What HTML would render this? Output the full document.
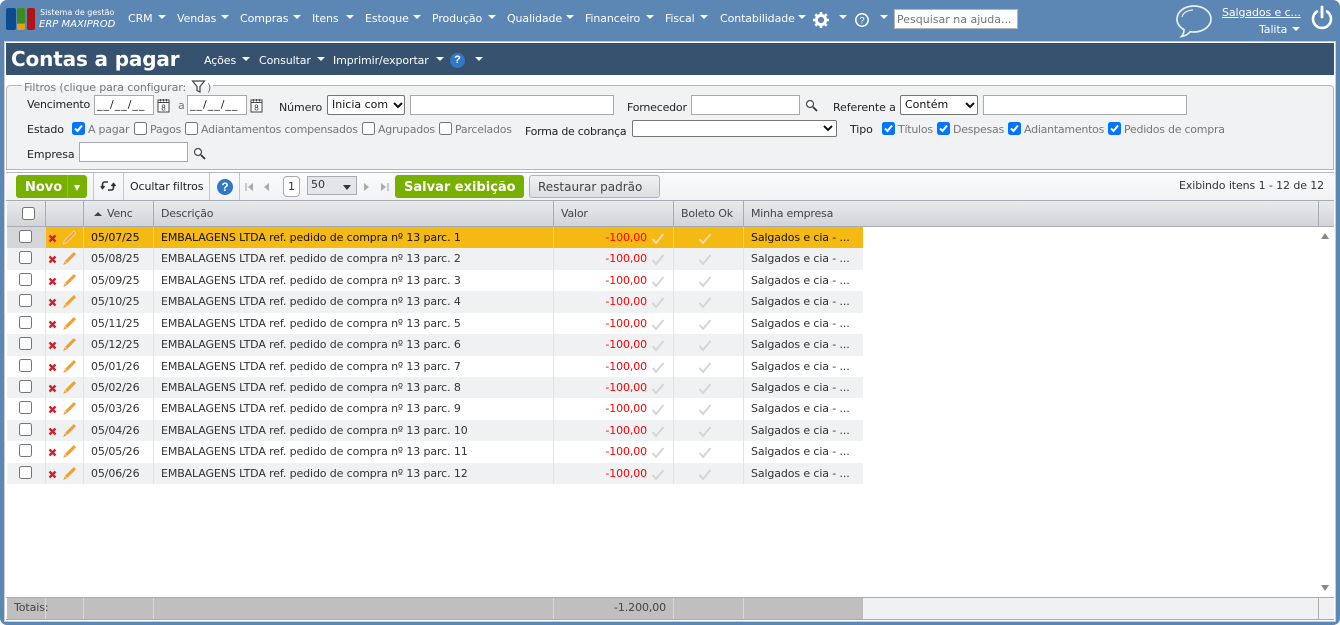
<!DOCTYPE html>
<html lang="pt-BR">
<head>
<meta charset="utf-8">
<title>Contas a pagar</title>
<style>
html,body{margin:0;padding:0;width:1340px;height:625px;overflow:hidden;background:#fff}
body{position:relative;font-family:"DejaVu Sans","Liberation Sans",sans-serif;font-size:11px;color:#222}
.a{position:absolute}
.t{position:absolute;white-space:nowrap;line-height:14px;letter-spacing:-.1px}
.m{color:#fff;top:12px;font-size:11px}
.c{position:absolute;width:0;height:0;border-left:4px solid transparent;border-right:4px solid transparent;border-top:4px solid #fff}
.inp{position:absolute;box-sizing:border-box;background:#fff;border:1px solid #a9a9a9;height:20px}
.cb{position:absolute;box-sizing:border-box;width:13px;height:13px;border:1px solid #767676;border-radius:2.5px;background:#fff}
.cb.on{background:#0075ff;border-color:#0075ff}
.cb.on svg{position:absolute;left:0;top:0}
.g{color:#777;letter-spacing:-.25px}
.d{letter-spacing:1px}
.sel{position:absolute;box-sizing:border-box;background:#fff;border:1px solid #767676;border-radius:2px;height:20px;line-height:18px;padding-left:4px;font-size:11px;color:#111}
.hd{position:absolute;top:201px;height:25px;border-right:1px solid #a7adb5;box-sizing:border-box;background:linear-gradient(#e9eaec,#d2d4d8)}
.ht{position:absolute;top:207px;color:#444;white-space:nowrap;line-height:14px;letter-spacing:-.2px}
.r{position:absolute;left:7px;width:856px;background:#fff}
.r.e{background:#f0f1f3}
.r.o{background:#f5b914}
.r b{position:absolute;top:0;bottom:0;width:1px;background:#e2e3e5;font-weight:normal}
.r.o b{background:#f8d260}
.r span{position:absolute;top:4px;white-space:nowrap;line-height:14px;letter-spacing:-.12px;color:#333}
.r.o span{color:#111}
.r span.v{color:#f00;right:216px}
.r .k{position:absolute;left:12px;top:3px;width:13px;height:13px;box-sizing:border-box;border:1px solid #767676;border-radius:2.5px;background:#fff}
.r svg{position:absolute}
.x{left:41px;top:7px}
.p{left:55px;top:3px}
.k1{left:644px;top:5px}
.k2{left:691px;top:5px}
.f{position:absolute;top:598px;height:21px;background:#bfbfbf;border-right:1px solid #d8d8d8;box-sizing:border-box}
</style>
</head>
<body>
<div class="a" style="left:0;top:0;width:1340px;height:625px;background:#5c86b3;border-radius:7px"></div>

<svg width="0" height="0" style="position:absolute">
<symbol id="ix" viewBox="0 0 9 9"><path d="M1.500 1.500l6 6M7.500 1.500l-6 6" stroke="#c9252c" stroke-width="2.400"/></symbol>
<symbol id="ip" viewBox="0 0 15 15"><path d="M11.800 1l2.200 2.200L5 12.300 1.200 14l1.600-4z" fill="#f0a035"/><path d="M2.800 10l2.200 2.300" stroke="#f7cf9a" stroke-width="1"/></symbol>
<symbol id="ipo" viewBox="0 0 15 15"><path d="M11.800 1l2.200 2.200L5 12.300 1.200 14l1.600-4z" fill="#f2a83a" stroke="#f9d78d" stroke-width=".8"/></symbol>
<symbol id="ic" viewBox="0 0 14 13"><path d="M1.500 7l3.500 4 7.500-9" fill="none" stroke="#d5d5d5" stroke-width="2"/></symbol>
<symbol id="ico" viewBox="0 0 14 13"><path d="M1.500 7l3.500 4 7.500-9" fill="none" stroke="#ecdcae" stroke-width="2"/></symbol>
<symbol id="cal" viewBox="0 0 13 15"><rect x="1" y="2" width="11" height="12" fill="#fff" stroke="#444"/><path d="M1 4.500h11M3.500 1v2.500M6.500 1v2.500M9.500 1v2.500" stroke="#444"/><text x="6.500" y="12.500" font-size="8" text-anchor="middle" fill="#333" font-family="Liberation Sans">8</text></symbol>
<symbol id="lup" viewBox="0 0 13 13"><circle cx="5" cy="5" r="3.500" fill="#fff" stroke="#444" stroke-width="1.200"/><path d="M8 8l4 4" stroke="#333" stroke-width="1.800"/></symbol>
<symbol id="chev" viewBox="0 0 10 7"><path d="M1 1l4 4 4-4" fill="none" stroke="#111" stroke-width="2"/></symbol>
<symbol id="tick" viewBox="0 0 11 11"><path d="M2 5.500l2.500 2.500L9 2.500" fill="none" stroke="#fff" stroke-width="2"/></symbol>
</svg>

<!-- top bar -->
<div class="a" style="left:6px;top:8px;width:10px;height:22px;background:#0b4c8f;border-radius:2px"></div>
<div class="a" style="left:17px;top:8px;width:8px;height:15px;background:#3f8a1f;border-radius:2px 2px 0 0"></div>
<div class="a" style="left:17px;top:24px;width:8px;height:6px;background:#e0a218;border-radius:0 0 2px 2px"></div>
<div class="a" style="left:27px;top:8px;width:8px;height:22px;background:#b01414;border-radius:2px"></div>
<div class="t" style="left:40px;top:6px;color:#fff;font-size:8px;letter-spacing:0">Sistema de gestão</div>
<div class="t" style="left:39px;top:18px;color:#fff;font-size:10px;font-style:italic;letter-spacing:0">ERP MAXIPROD</div>

<div class="t m" style="left:128px">CRM</div><div class="c" style="left:158px;top:15px"></div>
<div class="t m" style="left:177px">Vendas</div><div class="c" style="left:221px;top:15px"></div>
<div class="t m" style="left:240px">Compras</div><div class="c" style="left:293px;top:15px"></div>
<div class="t m" style="left:312px">Itens</div><div class="c" style="left:346px;top:15px"></div>
<div class="t m" style="left:365px">Estoque</div><div class="c" style="left:413px;top:15px"></div>
<div class="t m" style="left:432px">Produção</div><div class="c" style="left:488px;top:15px"></div>
<div class="t m" style="left:507px">Qualidade</div><div class="c" style="left:566px;top:15px"></div>
<div class="t m" style="left:585px">Financeiro</div><div class="c" style="left:646px;top:15px"></div>
<div class="t m" style="left:665px">Fiscal</div><div class="c" style="left:700px;top:15px"></div>
<div class="t m" style="left:720px">Contabilidade</div><div class="c" style="left:798px;top:15px"></div>

<svg class="a" style="left:812px;top:11px" width="18" height="18" viewBox="0 0 18 18"><circle cx="9" cy="9" r="4.600" fill="none" stroke="#fff" stroke-width="3"/><path d="M9 1v3M9 14v3M1 9h3M14 9h3M3.300 3.300l2.100 2.100M12.600 12.600l2.100 2.100M3.300 14.700l2.100-2.100M12.600 5.400l2.100-2.100" stroke="#fff" stroke-width="2.600"/></svg>
<div class="c" style="left:839px;top:15px"></div>
<svg class="a" style="left:854px;top:12px" width="16" height="16" viewBox="0 0 16 16"><circle cx="8" cy="8" r="6.200" fill="none" stroke="#fff" stroke-width="1.500"/><text x="8" y="11.500" font-size="9.500" text-anchor="middle" fill="#fff" font-family="Liberation Sans">?</text></svg>
<div class="c" style="left:880px;top:15px"></div>
<div class="a" style="left:894px;top:9px;width:124px;height:20px;box-sizing:border-box;background:#fff;border:1px solid #b5b5b5"></div>
<div class="t" style="left:897px;top:13px;color:#757575;letter-spacing:0">Pesquisar na ajuda...</div>

<svg class="a" style="left:1175px;top:4px" width="38" height="34" viewBox="0 0 38 34"><path d="M19 2C9.500 2 2 7.700 2 15c0 4.500 2.800 8.300 7 10.600 0 2.500-.8 5-2.500 6.900 3.500-.5 6.700-2.500 8.800-4.800 1.200.2 2.400.3 3.700.3 9.400 0 17-5.800 17-13S28.400 2 19 2z" fill="none" stroke="#e8eef5" stroke-width="1.700"/><path d="M7 13c1-4 5-6.500 11-7" fill="none" stroke="#dfe7f0" stroke-width="1.300"/></svg>
<div class="t" style="left:1222px;top:6px;color:#fff;text-decoration:underline;letter-spacing:-.1px">Salgados e c...</div>
<div class="t" style="left:1259px;top:23px;color:#fff">Talita</div>
<div class="c" style="left:1292px;top:27px"></div>
<svg class="a" style="left:1310px;top:5px" width="24" height="26" viewBox="0 0 24 26"><path d="M7 6.500A9 9 0 1 0 17 6.500" fill="none" stroke="#fff" stroke-width="2.600" stroke-linecap="round"/><path d="M12 2v10" stroke="#fff" stroke-width="2.800" stroke-linecap="round"/></svg>

<!-- main container -->
<div class="a" style="left:4px;top:41px;width:1332px;height:581px;background:#fff;border:1px solid #c9ced4;box-sizing:border-box"></div>

<!-- title -->
<div class="a" style="left:6px;top:43px;width:1328px;height:32px;background:#37526f"></div>
<div class="t" style="left:11px;top:47px;color:#fff;font-size:20px;font-weight:bold;line-height:24px;letter-spacing:-.15px">Contas a pagar</div>
<div class="t" style="left:204px;top:54px;color:#fff">Ações</div><div class="c" style="left:242px;top:57px"></div>
<div class="t" style="left:259px;top:54px;color:#fff">Consultar</div><div class="c" style="left:317px;top:57px"></div>
<div class="t" style="left:333px;top:54px;color:#fff">Imprimir/exportar</div><div class="c" style="left:436px;top:57px"></div>
<div class="a" style="left:450px;top:53px;width:15px;height:15px;border-radius:50%;background:#2f78c8;color:#fff;font:bold 11px/15px 'Liberation Sans',sans-serif;text-align:center">?</div>
<div class="c" style="left:475px;top:57px"></div>

<!-- filter panel -->
<div class="a" style="left:6px;top:85px;width:1328px;height:85px;box-sizing:border-box;background:#f1f2f4;border:1px solid #b4b6b9;border-radius:4px 4px 0 0"></div>
<div class="a" style="left:22px;top:80px;width:191px;height:12px;background:linear-gradient(#fff 50%,#f1f2f4 50%)"></div>
<div class="t g" style="left:24px;top:81px;letter-spacing:-.1px">Filtros (clique para configurar:</div>
<svg class="a" style="left:191px;top:79px" width="15" height="15" viewBox="0 0 15 15"><path d="M1.500 2h12L9 7.500V13l-3-1.500v-4z" fill="none" stroke="#444" stroke-width="1.200"/></svg>
<div class="t g" style="left:207px;top:81px">)</div>

<div class="t" style="left:27px;top:98px;letter-spacing:-.2px">Vencimento</div>
<div class="inp" style="left:94px;top:95px;width:60px"></div><div class="t d" style="left:97px;top:98px">__/__/__</div>
<svg class="a" style="left:157px;top:98px" width="13" height="15"><use href="#cal"/></svg>
<div class="t g" style="left:178px;top:99px">a</div>
<div class="inp" style="left:187px;top:95px;width:60px"></div><div class="t d" style="left:190px;top:98px">__/__/__</div>
<svg class="a" style="left:250px;top:98px" width="13" height="15"><use href="#cal"/></svg>
<div class="t" style="left:279px;top:101px">Número</div>
<div class="sel" style="left:327px;top:95px;width:78px">Inicia com</div>
<svg class="a" style="left:393px;top:102px" width="10" height="7"><use href="#chev"/></svg>
<div class="inp" style="left:410px;top:95px;width:204px"></div>
<div class="t" style="left:627px;top:101px;letter-spacing:-.2px">Fornecedor</div>
<div class="inp" style="left:691px;top:95px;width:109px"></div>
<svg class="a" style="left:805px;top:99px" width="13" height="13"><use href="#lup"/></svg>
<div class="t" style="left:833px;top:101px">Referente a</div>
<div class="sel" style="left:900px;top:95px;width:78px">Contém</div>
<svg class="a" style="left:965px;top:102px" width="10" height="7"><use href="#chev"/></svg>
<div class="inp" style="left:983px;top:95px;width:204px"></div>

<div class="t" style="left:27px;top:123px">Estado</div>
<div class="cb on" style="left:72px;top:122px"><svg width="11" height="11"><use href="#tick"/></svg></div>
<div class="t g" style="left:88px;top:123px">A pagar</div>
<div class="cb" style="left:134px;top:122px"></div><div class="t g" style="left:150px;top:123px">Pagos</div>
<div class="cb" style="left:185px;top:122px"></div><div class="t g" style="left:201px;top:123px">Adiantamentos compensados</div>
<div class="cb" style="left:362px;top:122px"></div><div class="t g" style="left:378px;top:123px">Agrupados</div>
<div class="cb" style="left:439px;top:122px"></div><div class="t g" style="left:455px;top:123px">Parcelados</div>
<div class="t" style="left:525px;top:125px;letter-spacing:-.27px">Forma de cobrança</div>
<div class="sel" style="left:632px;top:120px;width:205px;height:17px"></div>
<svg class="a" style="left:823px;top:125px" width="10" height="7"><use href="#chev"/></svg>
<div class="t" style="left:850px;top:123px">Tipo</div>
<div class="cb on" style="left:882px;top:122px"><svg width="11" height="11"><use href="#tick"/></svg></div>
<div class="t g" style="left:898px;top:123px">Títulos</div>
<div class="cb on" style="left:937px;top:122px"><svg width="11" height="11"><use href="#tick"/></svg></div>
<div class="t g" style="left:953px;top:123px">Despesas</div>
<div class="cb on" style="left:1008px;top:122px"><svg width="11" height="11"><use href="#tick"/></svg></div>
<div class="t g" style="left:1024px;top:123px">Adiantamentos</div>
<div class="cb on" style="left:1108px;top:122px"><svg width="11" height="11"><use href="#tick"/></svg></div>
<div class="t g" style="left:1124px;top:123px">Pedidos de compra</div>

<div class="t" style="left:27px;top:148px">Empresa</div>
<div class="inp" style="left:79px;top:142px;width:109px"></div>
<svg class="a" style="left:193px;top:147px" width="13" height="13"><use href="#lup"/></svg>

<!-- toolbar -->
<div class="a" style="left:6px;top:172px;width:1328px;height:29px;box-sizing:border-box;background:linear-gradient(#fafbfb,#f1f2f4);border-top:1px solid #b4b6b9;border-bottom:1px solid #a7adb5"></div>
<div class="a" style="left:16px;top:175px;width:71px;height:23px;background:#78b000;border-radius:3px"></div>
<div class="a" style="left:67px;top:175px;width:1px;height:23px;background:#8fc21f"></div>
<div class="t" style="left:25px;top:180px;color:#fff;font-weight:bold;font-size:13px;line-height:15px;letter-spacing:0">Novo</div>
<div class="a" style="left:74px;top:185px;width:0;height:0;border-left:3.500px solid transparent;border-right:3.500px solid transparent;border-top:6px solid #fff"></div>
<div class="a" style="left:93px;top:173px;width:1px;height:27px;background:#c5c7ca"></div>
<svg class="a" style="left:100px;top:179px" width="16" height="14" viewBox="0 0 16 14"><path d="M8 3H4.500C3 3 2.500 4.500 2.500 6v3M1 7l1.500 2.500L4.500 7M8 11h3.500C13 11 13.500 9.500 13.500 8V5M11.500 7l2-2.500L15.500 7" fill="none" stroke="#333" stroke-width="1.600"/></svg>
<div class="a" style="left:123px;top:173px;width:1px;height:27px;background:#c5c7ca"></div>
<div class="t" style="left:130px;top:180px;color:#222">Ocultar filtros</div>
<div class="a" style="left:209px;top:173px;width:1px;height:27px;background:#c5c7ca"></div>
<div class="a" style="left:217px;top:179px;width:16px;height:16px;border-radius:50%;background:#2f78c8;color:#fff;font:bold 12px/16px 'Liberation Sans',sans-serif;text-align:center">?</div>
<div class="a" style="left:239px;top:173px;width:1px;height:27px;background:#c5c7ca"></div>
<svg class="a" style="left:245px;top:182px" width="10" height="10" viewBox="0 0 10 10"><path d="M1 1v8" stroke="#aaa" stroke-width="1.200"/><path d="M8 1v8L3 5z" fill="#aaa"/></svg>
<svg class="a" style="left:262px;top:182px" width="10" height="10" viewBox="0 0 10 10"><path d="M7 1v8L2 5z" fill="#aaa"/></svg>
<div class="a" style="left:283px;top:176px;width:17px;height:21px;box-sizing:border-box;background:#fff;border:1px solid #aaa;border-radius:4px;text-align:center;line-height:19px;color:#333">1</div>
<div class="a" style="left:307px;top:176px;width:50px;height:19px;box-sizing:border-box;background:#e4e5e8;border:1px solid #a9abae;line-height:16px;padding-left:3px;color:#333">50</div>
<div class="a" style="left:343px;top:185px;width:0;height:0;border-left:4.500px solid transparent;border-right:4.500px solid transparent;border-top:5px solid #333"></div>
<svg class="a" style="left:361px;top:182px" width="10" height="10" viewBox="0 0 10 10"><path d="M3 1v8l5-4z" fill="#aaa"/></svg>
<svg class="a" style="left:379px;top:182px" width="10" height="10" viewBox="0 0 10 10"><path d="M2 1v8l5-4z" fill="#aaa"/><path d="M9 1v8" stroke="#aaa" stroke-width="1.200"/></svg>
<div class="a" style="left:395px;top:175px;width:129px;height:23px;background:#78b000;border-radius:3px"></div>
<div class="t" style="left:404px;top:180px;color:#fff;font-weight:bold;font-size:13px;line-height:15px;letter-spacing:0">Salvar exibição</div>
<div class="a" style="left:529px;top:175px;width:131px;height:23px;box-sizing:border-box;background:linear-gradient(#f0f1f2,#dcdee1);border:1px solid #b0b3b7;border-radius:3px"></div>
<div class="t" style="left:538px;top:180px;color:#444;font-size:12px;letter-spacing:0">Restaurar padrão</div>
<div class="t" style="left:1179px;top:179px;color:#333">Exibindo itens 1 - 12 de 12</div>

<!-- header -->
<div class="hd" style="left:7px;width:39px"></div>
<div class="hd" style="left:46px;width:38px"></div>
<div class="hd" style="left:84px;width:70px"></div>
<div class="hd" style="left:154px;width:400px"></div>
<div class="hd" style="left:554px;width:120px"></div>
<div class="hd" style="left:674px;width:70px"></div>
<div class="hd" style="left:744px;width:575px"></div>
<div class="hd" style="left:1319px;width:15px;border-right:0"></div>
<div class="a" style="left:7px;top:226px;width:1327px;height:1px;background:#a7adb5"></div>
<div class="cb" style="left:22px;top:207px"></div>
<div class="a" style="left:94px;top:212px;width:0;height:0;border-left:4px solid transparent;border-right:4px solid transparent;border-bottom:4px solid #444"></div>
<div class="ht" style="left:107px">Venc</div>
<div class="ht" style="left:161px">Descrição</div>
<div class="ht" style="left:561px">Valor</div>
<div class="ht" style="left:681px">Boleto Ok</div>
<div class="ht" style="left:751px">Minha empresa</div>

<!-- rows -->
<div class="a" style="left:7px;top:227px;width:39px;height:21px;background:#d3d5d9;z-index:2"></div>
<div class="a" style="left:19px;top:230px;width:13px;height:13px;box-sizing:border-box;border:1px solid #767676;border-radius:2.500px;background:#fff;z-index:3"></div>

<div class="r o" style="top:227px;height:21px"><b style="left:38px"></b><b style="left:76px"></b><b style="left:146px"></b><b style="left:546px"></b><b style="left:666px"></b><b style="left:736px"></b>
<svg class="x" width="9" height="9"><use href="#ix"/></svg><svg class="p" width="15" height="15"><use href="#ipo"/></svg>
<span style="left:84px">05/07/25</span><span style="left:154px">EMBALAGENS LTDA ref. pedido de compra nº 13 parc. 1</span><span class="v">-100,00</span>
<svg class="k1" width="14" height="13"><use href="#ico"/></svg><svg class="k2" width="14" height="13"><use href="#ico"/></svg>
<span style="left:744px">Salgados e cia - ...</span></div>

<div class="r e" style="top:248px;height:22px"><div class="k"></div><b style="left:38px"></b><b style="left:76px"></b><b style="left:146px"></b><b style="left:546px"></b><b style="left:666px"></b><b style="left:736px"></b>
<svg class="x" width="9" height="9"><use href="#ix"/></svg><svg class="p" width="15" height="15"><use href="#ip"/></svg>
<span style="left:84px">05/08/25</span><span style="left:154px">EMBALAGENS LTDA ref. pedido de compra nº 13 parc. 2</span><span class="v">-100,00</span>
<svg class="k1" width="14" height="13"><use href="#ic"/></svg><svg class="k2" width="14" height="13"><use href="#ic"/></svg>
<span style="left:744px">Salgados e cia - ...</span></div>

<div class="r" style="top:270px;height:21px"><div class="k"></div><b style="left:38px"></b><b style="left:76px"></b><b style="left:146px"></b><b style="left:546px"></b><b style="left:666px"></b><b style="left:736px"></b>
<svg class="x" width="9" height="9"><use href="#ix"/></svg><svg class="p" width="15" height="15"><use href="#ip"/></svg>
<span style="left:84px">05/09/25</span><span style="left:154px">EMBALAGENS LTDA ref. pedido de compra nº 13 parc. 3</span><span class="v">-100,00</span>
<svg class="k1" width="14" height="13"><use href="#ic"/></svg><svg class="k2" width="14" height="13"><use href="#ic"/></svg>
<span style="left:744px">Salgados e cia - ...</span></div>

<div class="r e" style="top:291px;height:22px"><div class="k"></div><b style="left:38px"></b><b style="left:76px"></b><b style="left:146px"></b><b style="left:546px"></b><b style="left:666px"></b><b style="left:736px"></b>
<svg class="x" width="9" height="9"><use href="#ix"/></svg><svg class="p" width="15" height="15"><use href="#ip"/></svg>
<span style="left:84px">05/10/25</span><span style="left:154px">EMBALAGENS LTDA ref. pedido de compra nº 13 parc. 4</span><span class="v">-100,00</span>
<svg class="k1" width="14" height="13"><use href="#ic"/></svg><svg class="k2" width="14" height="13"><use href="#ic"/></svg>
<span style="left:744px">Salgados e cia - ...</span></div>

<div class="r" style="top:313px;height:21px"><div class="k"></div><b style="left:38px"></b><b style="left:76px"></b><b style="left:146px"></b><b style="left:546px"></b><b style="left:666px"></b><b style="left:736px"></b>
<svg class="x" width="9" height="9"><use href="#ix"/></svg><svg class="p" width="15" height="15"><use href="#ip"/></svg>
<span style="left:84px">05/11/25</span><span style="left:154px">EMBALAGENS LTDA ref. pedido de compra nº 13 parc. 5</span><span class="v">-100,00</span>
<svg class="k1" width="14" height="13"><use href="#ic"/></svg><svg class="k2" width="14" height="13"><use href="#ic"/></svg>
<span style="left:744px">Salgados e cia - ...</span></div>

<div class="r e" style="top:334px;height:22px"><div class="k"></div><b style="left:38px"></b><b style="left:76px"></b><b style="left:146px"></b><b style="left:546px"></b><b style="left:666px"></b><b style="left:736px"></b>
<svg class="x" width="9" height="9"><use href="#ix"/></svg><svg class="p" width="15" height="15"><use href="#ip"/></svg>
<span style="left:84px">05/12/25</span><span style="left:154px">EMBALAGENS LTDA ref. pedido de compra nº 13 parc. 6</span><span class="v">-100,00</span>
<svg class="k1" width="14" height="13"><use href="#ic"/></svg><svg class="k2" width="14" height="13"><use href="#ic"/></svg>
<span style="left:744px">Salgados e cia - ...</span></div>

<div class="r" style="top:356px;height:21px"><div class="k"></div><b style="left:38px"></b><b style="left:76px"></b><b style="left:146px"></b><b style="left:546px"></b><b style="left:666px"></b><b style="left:736px"></b>
<svg class="x" width="9" height="9"><use href="#ix"/></svg><svg class="p" width="15" height="15"><use href="#ip"/></svg>
<span style="left:84px">05/01/26</span><span style="left:154px">EMBALAGENS LTDA ref. pedido de compra nº 13 parc. 7</span><span class="v">-100,00</span>
<svg class="k1" width="14" height="13"><use href="#ic"/></svg><svg class="k2" width="14" height="13"><use href="#ic"/></svg>
<span style="left:744px">Salgados e cia - ...</span></div>

<div class="r e" style="top:377px;height:21px"><div class="k"></div><b style="left:38px"></b><b style="left:76px"></b><b style="left:146px"></b><b style="left:546px"></b><b style="left:666px"></b><b style="left:736px"></b>
<svg class="x" width="9" height="9"><use href="#ix"/></svg><svg class="p" width="15" height="15"><use href="#ip"/></svg>
<span style="left:84px">05/02/26</span><span style="left:154px">EMBALAGENS LTDA ref. pedido de compra nº 13 parc. 8</span><span class="v">-100,00</span>
<svg class="k1" width="14" height="13"><use href="#ic"/></svg><svg class="k2" width="14" height="13"><use href="#ic"/></svg>
<span style="left:744px">Salgados e cia - ...</span></div>

<div class="r" style="top:398px;height:22px"><div class="k"></div><b style="left:38px"></b><b style="left:76px"></b><b style="left:146px"></b><b style="left:546px"></b><b style="left:666px"></b><b style="left:736px"></b>
<svg class="x" width="9" height="9"><use href="#ix"/></svg><svg class="p" width="15" height="15"><use href="#ip"/></svg>
<span style="left:84px">05/03/26</span><span style="left:154px">EMBALAGENS LTDA ref. pedido de compra nº 13 parc. 9</span><span class="v">-100,00</span>
<svg class="k1" width="14" height="13"><use href="#ic"/></svg><svg class="k2" width="14" height="13"><use href="#ic"/></svg>
<span style="left:744px">Salgados e cia - ...</span></div>

<div class="r e" style="top:420px;height:21px"><div class="k"></div><b style="left:38px"></b><b style="left:76px"></b><b style="left:146px"></b><b style="left:546px"></b><b style="left:666px"></b><b style="left:736px"></b>
<svg class="x" width="9" height="9"><use href="#ix"/></svg><svg class="p" width="15" height="15"><use href="#ip"/></svg>
<span style="left:84px">05/04/26</span><span style="left:154px">EMBALAGENS LTDA ref. pedido de compra nº 13 parc. 10</span><span class="v">-100,00</span>
<svg class="k1" width="14" height="13"><use href="#ic"/></svg><svg class="k2" width="14" height="13"><use href="#ic"/></svg>
<span style="left:744px">Salgados e cia - ...</span></div>

<div class="r" style="top:441px;height:22px"><div class="k"></div><b style="left:38px"></b><b style="left:76px"></b><b style="left:146px"></b><b style="left:546px"></b><b style="left:666px"></b><b style="left:736px"></b>
<svg class="x" width="9" height="9"><use href="#ix"/></svg><svg class="p" width="15" height="15"><use href="#ip"/></svg>
<span style="left:84px">05/05/26</span><span style="left:154px">EMBALAGENS LTDA ref. pedido de compra nº 13 parc. 11</span><span class="v">-100,00</span>
<svg class="k1" width="14" height="13"><use href="#ic"/></svg><svg class="k2" width="14" height="13"><use href="#ic"/></svg>
<span style="left:744px">Salgados e cia - ...</span></div>

<div class="r e" style="top:463px;height:21px"><div class="k"></div><b style="left:38px"></b><b style="left:76px"></b><b style="left:146px"></b><b style="left:546px"></b><b style="left:666px"></b><b style="left:736px"></b>
<svg class="x" width="9" height="9"><use href="#ix"/></svg><svg class="p" width="15" height="15"><use href="#ip"/></svg>
<span style="left:84px">05/06/26</span><span style="left:154px">EMBALAGENS LTDA ref. pedido de compra nº 13 parc. 12</span><span class="v">-100,00</span>
<svg class="k1" width="14" height="13"><use href="#ic"/></svg><svg class="k2" width="14" height="13"><use href="#ic"/></svg>
<span style="left:744px">Salgados e cia - ...</span></div>

<!-- scroll arrows -->
<div class="a" style="left:1321px;top:233px;width:0;height:0;border-left:4.500px solid transparent;border-right:4.500px solid transparent;border-bottom:6px solid #888"></div>
<div class="a" style="left:1321px;top:585px;width:0;height:0;border-left:4.500px solid transparent;border-right:4.500px solid transparent;border-top:6px solid #888"></div>

<!-- totals -->
<div class="a" style="left:6px;top:597px;width:1328px;height:1px;background:#a7adb5"></div>
<div class="f" style="left:7px;width:77px;border-right:1px solid #d8d8d8"></div>
<div class="a" style="left:45px;top:598px;width:1px;height:21px;background:#d8d8d8"></div>
<div class="f" style="left:84px;width:70px"></div>
<div class="f" style="left:154px;width:400px"></div>
<div class="f" style="left:554px;width:120px"></div>
<div class="f" style="left:674px;width:70px"></div>
<div class="f" style="left:744px;width:119px;border-right:0"></div>
<div class="a" style="left:863px;top:598px;width:471px;height:21px;background:#eff1f3"></div>
<div class="a" style="left:1318px;top:598px;width:1px;height:21px;background:#a7adb5"></div>
<div class="a" style="left:6px;top:619px;width:1328px;height:1px;background:#a7adb5"></div>
<div class="t" style="left:14px;top:601px;color:#444">Totais:</div>
<div class="t" style="left:614px;top:601px;color:#444">-1.200,00</div>

</body>
</html>
